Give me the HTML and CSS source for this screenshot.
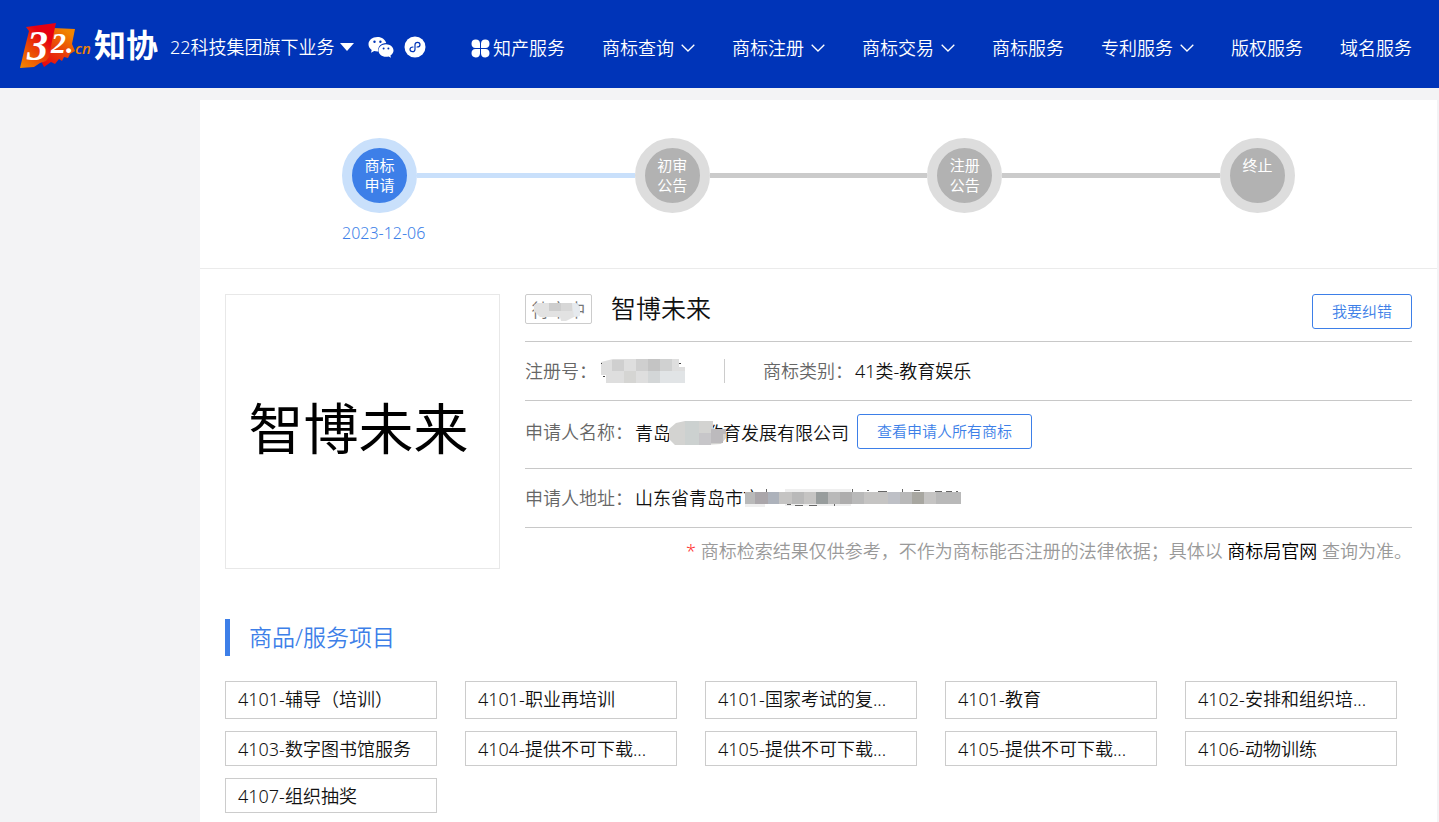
FILE: index.html
```html
<!DOCTYPE html>
<html lang="zh-CN">
<head>
<meta charset="utf-8">
<meta name="viewport" content="width=device-width, initial-scale=1">
<title>智博未来 - 商标详情</title>
<link rel="stylesheet" href="styles.css">
</head>
<body>
<header class="header">
  <a class="logo" href="#">
    <svg width="138" height="50" viewBox="0 0 138 50" role="img" aria-label="32.cn 知协">
      <defs>
        <linearGradient id="flagA" x1="0" y1="1" x2="0.7" y2="0"><stop offset="0" stop-color="#f08a00"/><stop offset="0.5" stop-color="#ea3c08"/><stop offset="0.8" stop-color="#e60012"/></linearGradient>
        <linearGradient id="flagB" x1="0" y1="1" x2="0.6" y2="0"><stop offset="0" stop-color="#e60012"/><stop offset="0.5" stop-color="#e83a0a"/><stop offset="1" stop-color="#f08300"/></linearGradient>
      </defs>
      <path d="M33 9 55 10 52 25 55 32 50 35 48 39 44 38 42 42 39 40 35 45 31 43 24 48 22 44Z" fill="url(#flagB)"/>
      <path d="M6 8 36 4 32 22 29 38 26 42 20 44 14 48 0 49 5 28 9 12Z" fill="url(#flagA)"/>
      <text class="logo-three" x="7" y="41">3</text>
      <text class="logo-two" x="31" y="34">2.</text>
      <text class="logo-cn" x="55" y="35">cn</text>
      <text class="logo-name" x="74" y="38">知协</text>
    </svg>
  </a>
  <button class="group-menu" type="button">22科技集团旗下业务
    <svg width="14" height="8" viewBox="0 0 14 8" aria-hidden="true"><path d="M0 0H14L7 8Z" fill="#fff"/></svg>
  </button>
  <a class="icon-link wechat" href="#" aria-label="微信">
    <svg width="26" height="22" viewBox="0 0 26 22" aria-hidden="true">
      <path d="M9.500 1C4.300 1 .5 4.200.5 8.300c0 2.400 1.200 4.300 3.200 5.700L3 16.800l3.200-1.700c1.200.3 2.100.5 3.300.5h.8C9.300 11 13 7.200 18.200 7.100 17.400 3.600 13.900 1 9.500 1Z" fill="#fff"/>
      <path d="M18 8.200c-4.200 0-7.500 2.800-7.500 6.300s3.300 6.300 7.500 6.300c.9 0 1.800-.2 2.600-.4l2.400 1.300-.6-2.200c1.900-1.300 3.100-3 3.100-5 0-3.500-3.400-6.300-7.500-6.300Z" fill="#fff"/>
      <g fill="#0034b8"><circle cx="6.500" cy="5.800" r="1.200"/><circle cx="12.400" cy="5.800" r="1.200"/><circle cx="15.600" cy="12.600" r="1"/><circle cx="20.400" cy="12.600" r="1"/></g>
    </svg>
  </a>
  <a class="icon-link mini" href="#" aria-label="小程序">
    <svg width="22" height="22" viewBox="0 0 22 22" aria-hidden="true">
      <circle cx="11" cy="11" r="10.500" fill="#fff"/>
      <path d="M9 11c-2 0-3 1-3 2.300S7.100 15.700 8.500 15.700 11 14.700 11 13.200V8.800C11 7.300 12 6.300 13.500 6.300S16 7.400 16 8.700 15 11 13 11" fill="none" stroke="#0034b8" stroke-width="1.200" stroke-linecap="round"/>
    </svg>
  </a>
  <nav class="nav">
    <a class="nav-lead" href="#"><svg width="19" height="19" viewBox="0 0 19 19" aria-hidden="true"><path d="M9 9H4.500A4.250 4.250 0 1 1 9 4.500ZM10 9V4.500A4.250 4.250 0 1 1 14.500 9ZM9 10V14.500A4.250 4.250 0 1 1 4.500 10ZM10 10H14.500A4.250 4.250 0 1 1 10 14.500Z" fill="#fff"/></svg>知产服务</a>
    <a href="#">商标查询<svg class="chevron" width="14" height="8" viewBox="0 0 14 8" aria-hidden="true"><path d="M.7.7 7 7 13.300.7"/></svg></a>
    <a href="#">商标注册<svg class="chevron" width="14" height="8" viewBox="0 0 14 8" aria-hidden="true"><path d="M.7.7 7 7 13.300.7"/></svg></a>
    <a href="#">商标交易<svg class="chevron" width="14" height="8" viewBox="0 0 14 8" aria-hidden="true"><path d="M.7.7 7 7 13.300.7"/></svg></a>
    <a href="#">商标服务</a>
    <a href="#">专利服务<svg class="chevron" width="14" height="8" viewBox="0 0 14 8" aria-hidden="true"><path d="M.7.7 7 7 13.300.7"/></svg></a>
    <a href="#">版权服务</a>
    <a href="#">域名服务</a>
  </nav>
</header>

<main class="page">
  <section class="progress">
    <ol class="steps">
      <li class="step active"><span class="dot">商标<br>申请</span></li>
      <li class="step"><span class="dot">初审<br>公告</span></li>
      <li class="step"><span class="dot">注册<br>公告</span></li>
      <li class="step"><span class="dot">终止</span></li>
    </ol>
    <time class="step-date" datetime="2023-12-06">2023-12-06</time>
  </section>

  <section class="detail">
    <div class="mark">智博未来</div>
    <div class="info">
      <div class="row row-title">
        <span class="status">待审中
          <svg class="cover" width="48" height="20" viewBox="0 0 48 20" aria-hidden="true"><path d="M3 2H42L46 6V15L40 16 32 20H27L26 16H6L0 10V4Z" fill="#e2e2e2"/><path d="M15 2H27V10H15Z" fill="#cdcdcd"/><path d="M27 2H38V10H27Z" fill="#d7d7d7"/><path d="M38 2H42L46 6V15L40 16Z" fill="#e6eaee"/></svg>
        </span>
        <h1 class="title">智博未来</h1>
        <button class="outline-btn correct" type="button">我要纠错</button>
      </div>
      <div class="row">
        <span class="label">注册号：</span>
        <svg class="number" width="84" height="24" viewBox="0 0 84 24" aria-hidden="true"><path d="M0 3 12 0H78V8H84V24H5V16H0Z" fill="#dedede"/><path d="M11 1H23V12H11ZM35 0H47V12H35Z" fill="#cfcfcf"/><path d="M47 0H59V12H47Z" fill="#c4c4c4"/><path d="M59 0H71V12H59Z" fill="#d0d1d1"/><path d="M23 12H35V24H23Z" fill="#d5d5d3"/><path d="M47 12H59V24H47Z" fill="#d3d6d7"/><path d="M59 12H84V24H59Z" fill="#e1e4e6"/><path d="M0 4H1V5H0ZM2 17H4V18H2ZM78 4H80V5H78Z" fill="#444"/></svg>
        <span class="rule"></span>
        <span class="label">商标类别：</span>
        <span class="value">41类-教育娱乐</span>
      </div>
      <div class="row row-owner">
        <span class="label">申请人名称：</span>
        <span class="value">青岛<svg class="inline-cover" width="34" height="24" viewBox="0 0 34 24" aria-hidden="true"><path d="M5 2 14 0H42V8L55 8V17L50 23 32 24H4L-2 18V8Z" fill="#d3d3d1"/><path d="M14 0H28V24H14Z" fill="#ccd1d0"/><path d="M28 12H40V24H28Z" fill="#c7c6c9"/><path d="M40 8H55V13H52V22H40Z" fill="#bcbabd"/></svg>教育发展有限公司</span>
        <button class="outline-btn" type="button">查看申请人所有商标</button>
      </div>
      <div class="row">
        <span class="label">申请人地址：</span>
        <span class="value">山东省青岛市市<svg class="address-cover" width="216" height="24" viewBox="0 -2 216 24" aria-hidden="true"><path d="M0 16H20V19H0ZM40 1H106V18H40Z" fill="#efefef"/><path d="M21 1H22V4H21ZM42 16H46V17H42ZM50 17H58V18H50ZM64 17H72V18H64ZM89 16H90V18H89ZM107 1H108V4H107ZM122 2H124V3H122ZM133 3H142V4H133ZM157 1H158V4H157ZM169 2H175V3H169ZM190 3H197V4H190ZM201 3H207V4H201ZM211 3H213V4H211Z" fill="#666"/><path d="M0 4H216V16H0Z" fill="#b9b9b9"/><path d="M10 4H23V16H10Z" fill="#aaa6aa"/><path d="M23 4H34V16H23Z" fill="#adb2bb"/><path d="M34 4H47V16H34ZM59 4H71V16H59ZM119 4H143V16H119ZM179 4H191V16H179Z" fill="#c5c4c3"/><path d="M71 4H83V16H71Z" fill="#989d9d"/><path d="M95 4H107V16H95Z" fill="#aeadad"/><path d="M143 4H155V16H143Z" fill="#bec0c6"/><path d="M167 4H179V16H167Z" fill="#a8a7a1"/></svg></span>
      </div>
      <p class="note"><span class="star">*</span> 商标检索结果仅供参考，不作为商标能否注册的法律依据；具体以 <a href="#">商标局官网</a> 查询为准。</p>
    </div>
  </section>

  <section class="goods">
    <h2 class="goods-title">商品/服务项目</h2>
    <ul class="goods-list">
      <li>4101-辅导（培训）</li>
      <li>4101-职业再培训</li>
      <li>4101-国家考试的复...</li>
      <li>4101-教育</li>
      <li>4102-安排和组织培...</li>
      <li>4103-数字图书馆服务</li>
      <li>4104-提供不可下载...</li>
      <li>4105-提供不可下载...</li>
      <li>4105-提供不可下载...</li>
      <li>4106-动物训练</li>
      <li>4107-组织抽奖</li>
    </ul>
  </section>
</main>
</body>
</html>
```

FILE: styles.css
```css
* {
  box-sizing: border-box;
}

body {
  margin: 0;
  background: #f3f3f5;
  color: #111;
  font-family: "Noto Sans", "Noto Sans CJK SC", sans-serif;
  font-size: 18px;
  font-weight: 350;
  line-height: 24px;
}

a {
  color: inherit;
  text-decoration: none;
}

button {
  font: inherit;
  color: inherit;
  background: none;
  border: 0;
  padding: 0;
  cursor: pointer;
}

svg {
  flex: none;
}

/* Header */
.header {
  display: flex;
  align-items: center;
  height: 88px;
  padding: 6px 27px 0 20px;
  background: #0034b8;
  color: #fff;
  white-space: nowrap;
}

.logo {
  display: flex;
  margin-right: 12px;
  padding-bottom: 6px;
}

.logo text {
  fill: #fff;
  font-weight: 700;
}

.logo .logo-three {
  font-family: "Liberation Serif", serif;
  font-size: 42px;
  font-style: italic;
}

.logo .logo-two {
  font-family: "Liberation Serif", serif;
  font-size: 30px;
  font-style: italic;
}

.logo .logo-cn {
  fill: #f08300;
  font-family: "Open Sans", sans-serif;
  font-size: 15px;
  font-style: italic;
  font-weight: 600;
}

.logo .logo-name {
  font-family: "Noto Sans CJK SC", sans-serif;
  font-size: 32px;
}

.group-menu {
  display: flex;
  align-items: center;
  gap: 5px;
  padding-bottom: 1px;
}

.icon-link {
  display: flex;
}

.wechat {
  margin-left: 14px;
}

.mini {
  margin-left: 10px;
}

.nav {
  display: flex;
  gap: 37px;
  margin-left: auto;
  padding-top: 2px;
}

.nav a {
  display: flex;
  align-items: center;
  gap: 7px;
}

.nav .nav-lead {
  gap: 3px;
}

.chevron {
  fill: none;
  stroke: #fff;
  stroke-width: 1.3;
}

/* Page card */
.page {
  margin: 12px 2px 0 200px;
  min-height: calc(100vh - 100px);
  background: #fff;
}

.progress {
  padding: 38px 142px 23px;
  border-bottom: 1px solid #ebebeb;
  font-size: 15px;
  font-weight: 400;
  line-height: 20px;
}

.steps {
  display: flex;
  align-items: center;
  margin: 0 0 10px;
  padding: 0;
  list-style: none;
}

.step {
  display: flex;
  align-items: center;
  flex: 1;
}

.step:last-child {
  flex: none;
}

.step::after {
  content: "";
  flex: 1;
  height: 5px;
  background: #cbcbcb;
}

.step:last-child::after {
  content: none;
}

.dot {
  flex: none;
  width: 75px;
  height: 75px;
  padding-top: 7px;
  border: 10px solid #ddd;
  border-radius: 50%;
  background: #b2b2b2;
  color: #fff;
  text-align: center;
}

.active .dot {
  border-color: #c9e0fb;
  background: #3d7fe8;
}

.active::after {
  background: #c9e0fb;
}

.step-date {
  display: block;
  padding-bottom: 2px;
  color: #3d7fe8;
  font-size: 16px;
  font-weight: 350;
}

/* Detail */
.detail {
  display: flex;
  gap: 25px;
  padding: 25px 25px 0;
}

.mark {
  display: flex;
  align-items: center;
  justify-content: center;
  flex: none;
  width: 275px;
  height: 275px;
  padding: 0 8px 8px 0;
  border: 1px solid #e8e8e8;
  color: #000;
  font-size: 55px;
  font-weight: 400;
}

.info {
  flex: 1;
  min-width: 0;
}

.row {
  display: flex;
  align-items: center;
  height: 59px;
  border-bottom: 1px solid #c8c8c8;
  white-space: nowrap;
}

.row-title {
  align-items: flex-start;
  height: 48px;
}

.row-owner {
  height: 68px;
  padding-bottom: 6px;
}

.status {
  position: relative;
  width: 67px;
  height: 30px;
  border: 1px solid #ccc;
  border-radius: 2px;
  color: #777;
  line-height: 30px;
  text-align: center;
}

.cover {
  position: absolute;
  top: 6px;
  left: 8px;
}

.title {
  margin: 0 0 0 19px;
  font-size: 25px;
  font-weight: 350;
  line-height: 28px;
}

.outline-btn {
  height: 35px;
  padding: 0 19px 2px;
  border: 1px solid #3d7fe8;
  border-radius: 3px;
  color: #3d7fe8;
  font-size: 15px;
}

.correct {
  margin-left: auto;
}

.label {
  color: #666;
}

.number {
  margin-left: 4px;
}

.rule {
  width: 1px;
  height: 24px;
  margin: 0 38px 0 39px;
  background: #ccc;
}

.value {
  padding-left: 2px;
}

.row-owner .value {
  margin-right: 8px;
  padding-top: 2px;
}

.inline-cover {
  position: relative;
  overflow: visible;
  vertical-align: top;
}

.address-cover {
  margin-left: -16px;
  vertical-align: top;
}

.note {
  margin: 11px 0 0;
  color: #999;
  text-align: right;
}

.star {
  color: #f33;
}

.note a {
  color: #000;
}

/* Goods */
.goods {
  padding: 50px 25px 8px;
}

.goods-title {
  margin: 0 0 25px;
  padding-left: 19px;
  border-left: 5px solid #3d7fe8;
  color: #3d7fe8;
  font-size: 23px;
  font-weight: 350;
  line-height: 37px;
}

.goods-list {
  display: grid;
  grid-template-columns: repeat(auto-fill, 212px);
  grid-template-rows: 38px;
  grid-auto-rows: 35px;
  gap: 12px 28px;
  margin: 0;
  padding: 0;
  list-style: none;
}

.goods-list li {
  padding: 0 12px;
  border: 1px solid #ccc;
  line-height: 34px;
  white-space: nowrap;
}
```
